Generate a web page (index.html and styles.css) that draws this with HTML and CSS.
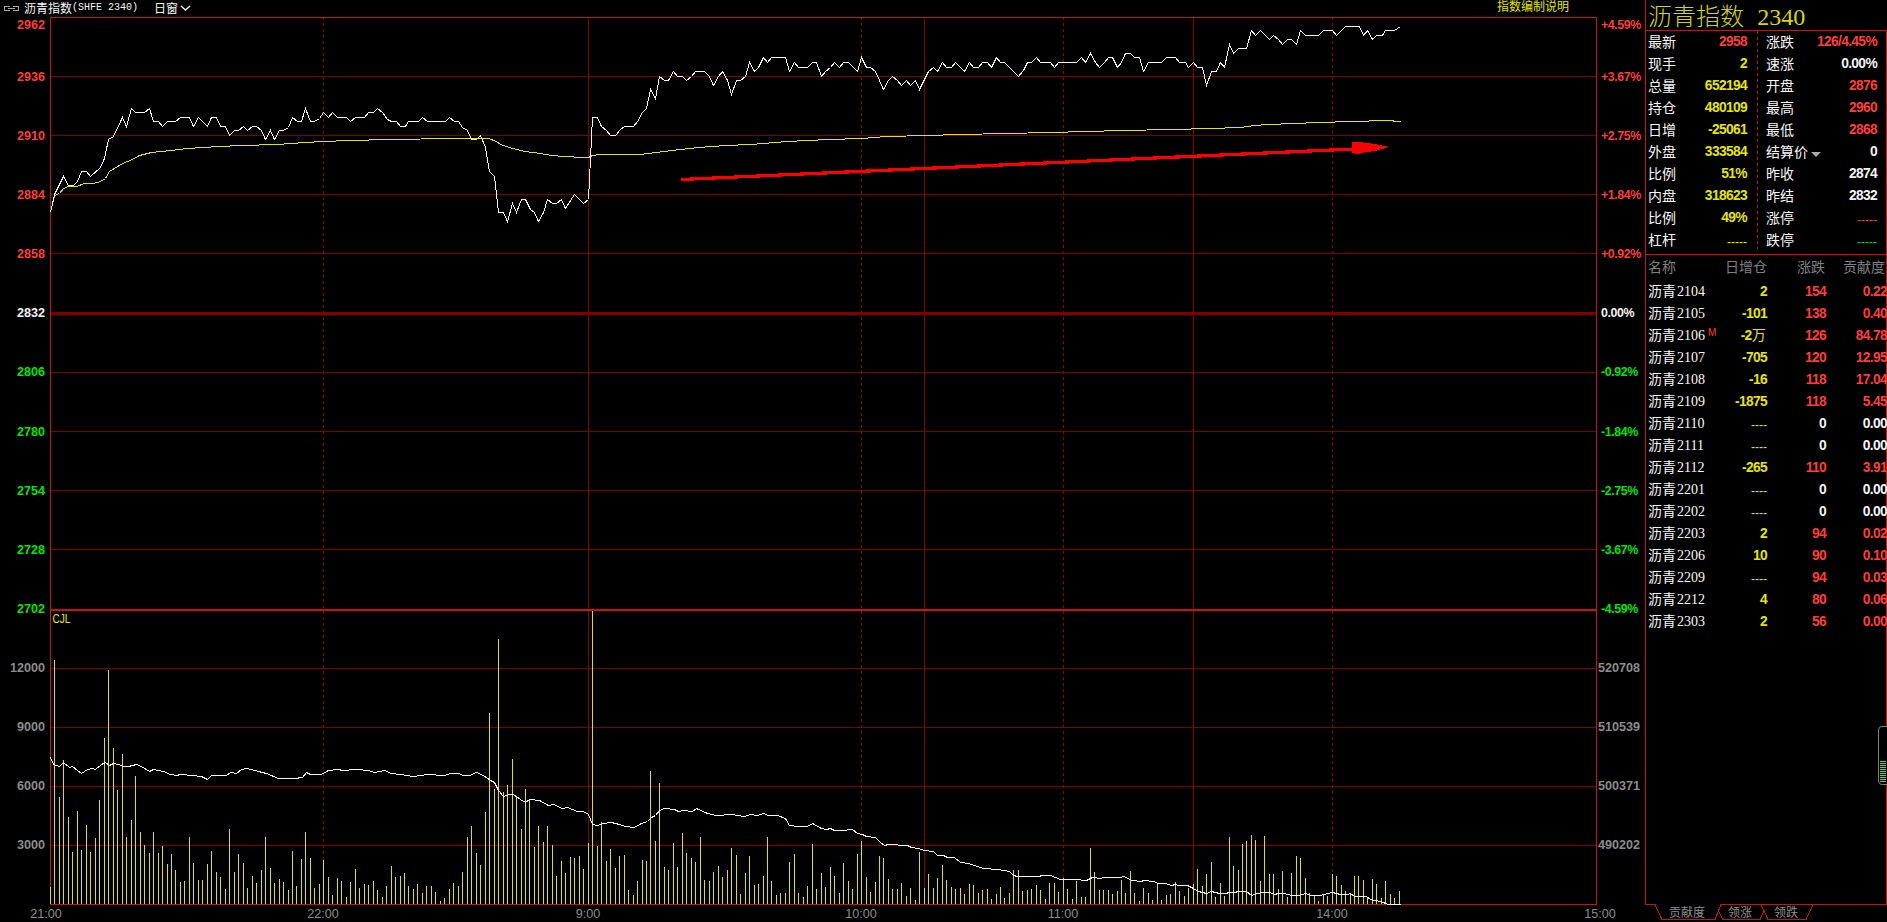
FILE: index.html
```html
<!DOCTYPE html>
<html lang="zh-CN">
<head>
    <meta charset="UTF-8">
    <title>沥青指数 2340</title>
    <link rel="stylesheet" href="styles.css">
</head>
<body>
    <div class="app">
        <div class="main">
            <div class="topbar">
                <svg class="link-icon" width="17" height="7" viewBox="0 0 17 7" shape-rendering="crispEdges">
                    <path d="M6.5 2V1.5H1.5V5.5H6.5V5M10.5 2V1.5H15.5V5.5H10.5V5M5 3.5H12" fill="none" stroke="#a8a8a8"/>
                </svg>
                <span class="name">沥青指数</span><span class="code">(SHFE 2340)</span>
                <span class="period">日窗</span>
                <svg class="chevron" width="11" height="7" viewBox="0 0 11 7"><path d="M1 1L5.5 5L10 1" fill="none" stroke="#f0f0f0" stroke-width="1.5"/></svg>
                <span class="explain">指数编制说明</span>
            </div>
            <div class="charts">
                <div class="axis axis-left">
                    <span class="edge up">2962</span>
                    <span class="up">2936</span>
                    <span class="up">2910</span>
                    <span class="up">2884</span>
                    <span class="up">2858</span>
                    <span class="flat">2832</span>
                    <span class="down">2806</span>
                    <span class="down">2780</span>
                    <span class="down">2754</span>
                    <span class="down">2728</span>
                    <span class="down">2702</span>
                    <span>12000</span>
                    <span>9000</span>
                    <span>6000</span>
                    <span>3000</span>
                </div>
                <svg class="plot" width="1547" height="888" viewBox="50 17 1547 888" shape-rendering="crispEdges">
                    <g id="grid"></g>
                    <g id="bars"></g>
                    <polyline id="oi" class="line-white"/>
                    <polyline id="avg" class="line-yellow"/>
                    <polyline id="price" class="line-white"/>
                    <line class="arrow" x1="681" y1="179.5" x2="1354" y2="149"/>
                    <polygon class="arrow-head" points="1352,142 1358,142 1367,143 1375,144 1389,147 1375,151 1366,152 1358,154 1352,153"/>
                    <text class="indicator" x="52.5" y="623" textLength="18" lengthAdjust="spacingAndGlyphs">CJL</text>
                </svg>
                <div class="axis axis-right">
                    <span class="edge up">+4.59%</span>
                    <span class="up">+3.67%</span>
                    <span class="up">+2.75%</span>
                    <span class="up">+1.84%</span>
                    <span class="up">+0.92%</span>
                    <span class="flat">0.00%</span>
                    <span class="down">-0.92%</span>
                    <span class="down">-1.84%</span>
                    <span class="down">-2.75%</span>
                    <span class="down">-3.67%</span>
                    <span class="down">-4.59%</span>
                    <span class="vol">520708</span>
                    <span class="vol">510539</span>
                    <span class="vol">500371</span>
                    <span class="vol">490202</span>
                </div>
            </div>
            <div class="times">
                <span>21:00</span><span>22:00</span><span>9:00</span><span>10:00</span><span>11:00</span><span>14:00</span><span>15:00</span>
            </div>
        </div>

        <div class="side">
            <div class="panel">
                <div class="title">沥青指数 <span class="title-code">2340</span></div>
                <div class="quote">
                    <div class="col">
                        <div class="row"><span>最新</span><b class="up">2958</b></div>
                        <div class="row"><span>现手</span><b class="yellow">2</b></div>
                        <div class="row"><span>总量</span><b class="yellow">652194</b></div>
                        <div class="row"><span>持仓</span><b class="yellow">480109</b></div>
                        <div class="row"><span>日增</span><b class="yellow">-25061</b></div>
                        <div class="row"><span>外盘</span><b class="yellow">333584</b></div>
                        <div class="row"><span>比例</span><b class="yellow">51%</b></div>
                        <div class="row"><span>内盘</span><b class="yellow">318623</b></div>
                        <div class="row"><span>比例</span><b class="yellow">49%</b></div>
                        <div class="row"><span>杠杆</span><i class="yellow">-----</i></div>
                    </div>
                    <div class="col col-right">
                        <div class="row"><span>涨跌</span><b class="up">126/4.45%</b></div>
                        <div class="row"><span>速涨</span><b class="flat">0.00%</b></div>
                        <div class="row"><span>开盘</span><b class="up">2876</b></div>
                        <div class="row"><span>最高</span><b class="up">2960</b></div>
                        <div class="row"><span>最低</span><b class="up">2868</b></div>
                        <div class="row"><span class="dropdown">结算价</span><b class="flat">0</b></div>
                        <div class="row"><span>昨收</span><b class="flat">2874</b></div>
                        <div class="row"><span>昨结</span><b class="flat">2832</b></div>
                        <div class="row"><span>涨停</span><i class="up">-----</i></div>
                        <div class="row"><span>跌停</span><i class="down">-----</i></div>
                    </div>
                </div>
                <div class="contracts">
                    <div class="item head"><span>名称</span><span>日增仓</span><span>涨跌</span><span>贡献度</span></div>
                    <div class="item"><span>沥青<em>2104</em></span><b class="yellow">2</b><b class="up">154</b><b class="up">0.22</b></div>
                    <div class="item"><span>沥青<em>2105</em></span><b class="yellow">-101</b><b class="up">138</b><b class="up">0.40</b></div>
                    <div class="item"><span>沥青<em>2106</em><sup>M</sup></span><b class="yellow wan">-2<span>万</span></b><b class="up">126</b><b class="up">84.78</b></div>
                    <div class="item"><span>沥青<em>2107</em></span><b class="yellow">-705</b><b class="up">120</b><b class="up">12.95</b></div>
                    <div class="item"><span>沥青<em>2108</em></span><b class="yellow">-16</b><b class="up">118</b><b class="up">17.04</b></div>
                    <div class="item"><span>沥青<em>2109</em></span><b class="yellow">-1875</b><b class="up">118</b><b class="up">5.45</b></div>
                    <div class="item"><span>沥青<em>2110</em></span><i class="yellow">----</i><b class="flat">0</b><b class="flat">0.00</b></div>
                    <div class="item"><span>沥青<em>2111</em></span><i class="yellow">----</i><b class="flat">0</b><b class="flat">0.00</b></div>
                    <div class="item"><span>沥青<em>2112</em></span><b class="yellow">-265</b><b class="up">110</b><b class="up">3.91</b></div>
                    <div class="item"><span>沥青<em>2201</em></span><i class="yellow">----</i><b class="flat">0</b><b class="flat">0.00</b></div>
                    <div class="item"><span>沥青<em>2202</em></span><i class="yellow">----</i><b class="flat">0</b><b class="flat">0.00</b></div>
                    <div class="item"><span>沥青<em>2203</em></span><b class="yellow">2</b><b class="up">94</b><b class="up">0.02</b></div>
                    <div class="item"><span>沥青<em>2206</em></span><b class="yellow">10</b><b class="up">90</b><b class="up">0.10</b></div>
                    <div class="item"><span>沥青<em>2209</em></span><i class="yellow">----</i><b class="up">94</b><b class="up">0.03</b></div>
                    <div class="item"><span>沥青<em>2212</em></span><b class="yellow">4</b><b class="up">80</b><b class="up">0.06</b></div>
                    <div class="item"><span>沥青<em>2303</em></span><b class="yellow">2</b><b class="up">56</b><b class="up">0.00</b></div>
                </div>
            </div>
            <svg class="tabs" width="242" height="18" viewBox="1645 904 242 18" shape-rendering="crispEdges">
                <path d="M1645 904.5H1655L1662 919.5H1715L1721 904.5H1887M1718.5 911L1723 919.5H1760L1764.5 910M1761 904.5L1768 919.5H1806L1813 904.5"/>
                <text x="1669" y="917">贡献度</text>
                <text x="1728" y="917">领涨</text>
                <text x="1774" y="917">领跌</text>
            </svg>
            <div class="gauge"><div class="level"></div></div>
        </div>
    </div>
    <script src="script.js"></script>
</body>
</html>
```
FILE: styles.css
```css
* {
    box-sizing: border-box;
}
body {
    margin: 0;
    background: #000;
    color: #f8f8f8;
    font-family: "Liberation Sans", "Noto Sans CJK SC", sans-serif;
    overflow: hidden;
}
.app {
    display: flex;
    width: 1887px;
    height: 922px;
}
.up {
    color: #ff3c3c;
}
.down {
    color: #00e600;
}
.flat {
    color: #f4f4f4;
}
.yellow {
    color: #e6e600;
}

/* chart area */
.main {
    width: 1645px;
}
.topbar {
    display: flex;
    align-items: center;
    height: 17px;
    padding-left: 3px;
    font: 12px/16px "Noto Sans CJK SC", sans-serif;
    white-space: pre;
}
.topbar span {
    margin-top: -2px;
}
.link-icon {
    margin-right: 4px;
}
.code {
    width: 66px;
    font: 10px/16px "Liberation Mono", monospace;
}
.period {
    margin-left: 16px;
}
.chevron {
    margin-left: 2px;
}
.topbar .explain {
    margin-left: 1306px;
    margin-top: -6px;
    color: #e6e600;
}
.charts {
    display: flex;
    height: 888px;
}
.axis {
    display: flex;
    flex-direction: column;
    color: #8c8c8c;
    font-size: 12.6px;
    font-weight: bold;
}
.axis span {
    flex: none;
    height: 59.1px;
    line-height: 60px;
}
.axis .edge {
    height: 30px;
    line-height: 16px;
}
.axis-left {
    width: 50px;
    padding-right: 5px;
    text-align: right;
}
.axis-right {
    width: 48px;
    padding-left: 4px;
}
.axis-right span {
    font-size: 12.4px;
    letter-spacing: -0.4px;
}
.axis-right .vol {
    margin-left: -3px;
    font-size: 12.6px;
    letter-spacing: 0;
}
.plot {
    display: block;
}
.line-white {
    fill: none;
    stroke: #f4f4f4;
}
.line-yellow {
    fill: none;
    stroke: #e6e600;
}
.bar {
    fill: #e0e010;
}
.grid-line {
    fill: #800000;
}
.frame-line {
    fill: #c81410;
}
.dash-line {
    stroke: #900000;
    stroke-dasharray: 3 3;
}
.arrow {
    stroke: #f00;
    stroke-width: 3.2;
}
.arrow-head {
    fill: #f00;
}
.indicator {
    fill: #e6e600;
    font-size: 12.6px;
}
.times {
    display: grid;
    grid-template-columns: 277px 265px 273px 202px 269px 268px 40px;
    padding-left: 26px;
    color: #8c8c8c;
    font-size: 12.6px;
    line-height: 18px;
}
.times span {
    width: 40px;
    text-align: center;
}

/* quote panel */
.side {
    position: relative;
    width: 242px;
}
.panel {
    height: 904px;
    border-left: 1px solid #c81410;
}
.title {
    height: 31px;
    padding-left: 2px;
    border-bottom: 1px solid #c81410;
    color: #d8d800;
    font: 300 24px/29px "Noto Sans CJK SC", sans-serif;
    white-space: pre;
}
.title-code {
    margin-left: 8px;
    font: 24px/29px "Liberation Serif", serif;
}
.quote {
    display: flex;
    height: 224px;
    border-right: 1px solid #c81410;
    border-bottom: 1px solid #c81410;
}
.col {
    width: 112px;
    padding: 0 11px 0 2px;
}
.col:first-child {
    background: repeating-linear-gradient(to bottom, #c81410 0 3px, transparent 3px 6px) right top / 1px 218px no-repeat;
}
.col-right {
    width: 128px;
    padding: 0 9px 0 8px;
}
.row {
    display: flex;
    justify-content: space-between;
    height: 22px;
    font-size: 13.8px;
    line-height: 22px;
}
.row span {
    font: 14px/20px "Noto Sans CJK SC", sans-serif;
}
.row b,
.item b {
    letter-spacing: -0.65px;
}
.row i,
.item i {
    padding-top: 2px;
    font-size: 12px;
    font-style: normal;
}
.dropdown::after {
    content: "";
    display: inline-block;
    margin-left: 3px;
    border: 5px solid transparent;
    border-top-color: #aaa;
    border-bottom: 0;
}
.contracts {
    border-right: 1px solid #c81410;
    height: 649px;
}
.item {
    display: grid;
    grid-template-columns: 60px 59px 59px 61px;
    height: 22px;
    padding-left: 2px;
    font-size: 13.8px;
    line-height: 23px;
    text-align: right;
}
.item span {
    font: 14px/20px "Noto Sans CJK SC", sans-serif;
    white-space: nowrap;
}
.item > span:first-child {
    text-align: left;
}
.item em {
    margin-left: 1px;
    font: 14px/20px "Liberation Serif", serif;
}
.item sup {
    margin-left: 3px;
    color: #ff3c3c;
    font: 10px/10px "Liberation Sans", sans-serif;
    vertical-align: 4px;
}
.item.head {
    grid-template-columns: 60px 59px 58px 60px;
    height: 25px;
    color: #808080;
}
.item.head span {
    line-height: 22px;
}
.wan {
    padding-right: 2px;
}
.tabs {
    display: block;
}
.tabs path {
    fill: none;
    stroke: #c81410;
}
.tabs text {
    fill: #909090;
    font: 12px "Noto Sans CJK SC", sans-serif;
}
.gauge {
    position: absolute;
    top: 726px;
    right: -4px;
    width: 13px;
    height: 59px;
    padding: 34px 2px 0 1px;
    border: 1px solid #808080;
    border-radius: 4px;
    background: #000;
}
.level {
    width: 6px;
    height: 21px;
    background: repeating-linear-gradient(to bottom, #4cd964 0 1px, transparent 1px 2px);
}
```
FILE: script.js
```js
const NS = 'http://www.w3.org/2000/svg';
const STEP = 1546 / 345;

// bar heights, one per minute
const volumes = [
    17, 244, 107, 144, 87, 52, 93, 54, 79, 52, 66, 104, 166, 234, 156, 114, 150, 67, 84, 128,
    72, 59, 51, 72, 51, 58, 40, 50, 34, 22, 23, 67, 41, 24, 24, 40, 53, 32, 27, 15,
    75, 32, 50, 41, 16, 28, 21, 34, 67, 36, 21, 25, 22, 14, 53, 18, 45, 72, 46, 16,
    20, 44, 27, 9, 26, 23, 7, 22, 35, 16, 20, 19, 23, 14, 7, 18, 38, 27, 28, 31,
    18, 15, 20, 11, 18, 18, 12, 3, 6, 15, 21, 18, 32, 67, 78, 51, 39, 92, 191, 115,
    265, 112, 119, 145, 108, 75, 115, 104, 57, 78, 62, 78, 59, 28, 43, 31, 47, 46, 48, 35,
    61, 293, 58, 82, 43, 55, 36, 48, 49, 14, 9, 23, 44, 43, 133, 63, 121, 37, 34, 61,
    37, 71, 51, 46, 42, 67, 24, 23, 32, 38, 27, 34, 56, 49, 10, 31, 48, 19, 20, 28,
    67, 23, 9, 11, 11, 42, 50, 11, 7, 18, 60, 15, 31, 17, 37, 28, 11, 41, 23, 15,
    50, 63, 27, 12, 22, 48, 46, 25, 15, 15, 21, 8, 16, 4, 52, 16, 30, 16, 26, 39,
    24, 17, 15, 16, 10, 20, 19, 11, 14, 15, 5, 10, 17, 6, 11, 34, 34, 13, 14, 15,
    19, 14, 5, 21, 21, 12, 26, 15, 5, 23, 7, 7, 56, 32, 14, 14, 14, 10, 13, 24,
    11, 33, 11, 3, 16, 11, 4, 20, 4, 9, 10, 22, 13, 8, 16, 20, 35, 18, 30, 42,
    7, 21, 8, 67, 38, 34, 60, 63, 69, 64, 23, 68, 30, 30, 15, 33, 7, 31, 48, 46,
    26, 11, 9, 3, 9, 8, 30, 28, 19, 13, 10, 28, 28, 24, 7, 25, 20, 6, 23, 10,
    6, 13
];

const price = `50,212 54,194 63,176 68,185 73,185 77,181 81,171 86,171 90,176 100,167 104,158 108,139 113,136
122,117 126,126 131,108 135,112 144,112 149,108 153,121 158,121 162,126 167,121 175,121 180,117 189,117 193,126
198,117 207,126 211,117 216,117 220,126 225,126 229,135 234,130 238,130 243,126 247,130 252,126 256,126 261,130
265,139 270,130 274,139 279,130 283,130 288,127 292,117 297,121 301,121 305,108 310,121 314,121 319,118 323,112
328,117 332,112 337,117 346,117 350,121 355,117 364,117 368,112 373,112 377,108 382,112 387,119 391,121 396,121
400,126 405,126 408,121 418,121 422,117 427,121 445,121 449,117 454,121 458,121 462,127 467,130 471,139 476,139
480,135 485,147 489,171 494,176 498,212 503,212 507,221 512,203 516,212 521,199 525,199 530,209 534,212 538,221
543,212 547,199 552,203 556,203 561,199 565,208 574,194 583,203 588,199 592,117 597,117 601,126 606,130 610,135
615,135 620,129 624,126 633,126 638,120 641,113 646,108 650,89 655,98 659,76 664,80 668,80 673,71 677,76 682,76
686,80 691,76 695,71 704,71 709,76 713,85 718,76 722,71 727,80 731,94 736,80 740,80 745,76 749,62 754,71 758,67
763,57 767,62 771,57 785,57 789,71 794,62 798,67 807,67 812,62 816,62 821,76 825,71 830,67 834,62 839,67 843,62
848,62 853,67 857,71 861,57 866,67 870,67 875,71 883,89 888,80 892,76 897,80 901,85 906,80 910,85 915,80 919,89
928,71 933,67 937,71 942,62 946,67 951,67 955,62 964,71 969,62 973,67 978,67 982,62 987,62 991,67 996,57 1000,62
1004,62 1018,76 1023,70 1027,62 1031,62 1036,57 1040,62 1050,62 1054,67 1058,62 1076,62 1081,57 1085,62 1090,53
1095,62 1099,67 1104,62 1108,57 1112,57 1117,67 1121,62 1125,53 1130,53 1134,57 1139,57 1143,71 1148,62 1161,62
1166,57 1175,57 1179,62 1185,62 1188,67 1193,62 1197,67 1202,67 1206,85 1211,71 1216,71 1220,62 1224,67 1229,44
1233,53 1238,48 1246,48 1251,30 1255,35 1260,30 1269,39 1273,35 1278,39 1282,44 1287,39 1291,39 1296,44 1300,30
1305,35 1318,35 1323,30 1332,30 1336,35 1345,26 1359,26 1363,35 1367,30 1372,39 1376,35 1382,35 1385,30 1394,30
1400,26`;

const avg = `50,212 54,195 59,193 63,188 68,186 76,186 84,183 93,183 100,181 105,178 109,171 122,163 132,159
139,155 151,152 170,150 187,148 218,146 241,145 277,144 304,142 323,141 349,140 389,139 452,138 488,138 496,141
500,144 512,148 525,151 540,153 551,155 564,156 583,157 588,157 592,155 600,154 640,154 656,152 680,149 698,147
725,145 751,144 786,141 828,139 861,138 886,136 927,135 958,134 1007,133 1048,132 1088,131 1120,130 1173,129
1209,128 1240,127 1254,125 1267,124 1294,123 1317,122 1353,121 1384,120 1392,120 1394,121 1400,121`;

const openInterest = `50,757 53,764 59,766 63,762 69,767 72,766 77,770 81,773 87,769 92,768 95,769 101,764
105,762 109,765 113,763 118,764 123,766 128,766 136,764 141,766 149,771 153,769 163,771 170,774 176,775 180,774
192,775 201,776 207,779 211,775 226,775 230,772 236,773 241,769 247,768 258,771 266,773 278,778 294,778 302,777
306,772 310,774 321,774 328,770 338,769 342,770 356,769 368,770 374,772 384,770 391,773 400,774 413,776 427,774
444,775 450,773 458,773 463,775 469,775 476,772 483,775 490,780 494,782 498,790 503,796 509,794 513,794 520,799
525,802 529,799 539,800 548,805 553,804 562,808 567,807 577,811 583,811 588,814 592,824 597,825 603,823 611,822
619,824 625,826 634,827 641,823 647,821 651,817 655,815 659,810 664,808 674,809 678,811 683,810 692,811 696,808
707,813 716,815 731,814 744,816 750,814 757,815 763,813 768,815 777,815 785,818 789,825 797,826 807,826 812,823
821,828 826,829 830,828 834,830 845,830 848,829 852,829 857,833 862,834 866,836 875,837 880,842 884,845 888,844
907,845 911,847 918,848 924,850 933,851 937,855 943,855 947,857 954,857 960,862 968,863 983,868 997,869 1009,871
1013,875 1017,876 1039,876 1041,875 1050,875 1060,879 1079,879 1082,880 1086,880 1092,877 1100,878 1103,877
1120,877 1123,876 1132,880 1140,881 1144,880 1153,881 1158,883 1165,883 1171,885 1175,884 1178,885 1187,885
1193,888 1198,891 1206,893 1211,891 1219,893 1226,893 1228,892 1234,892 1238,891 1246,891 1251,895 1256,893
1264,892 1269,892 1275,894 1277,893 1284,893 1291,895 1298,895 1305,893 1311,895 1320,895 1327,893 1332,892
1340,894 1347,894 1350,893 1354,896 1366,896 1370,899 1380,901 1388,904 1400,904`;

function add(parent, tag, attrs) {
    const el = document.createElementNS(NS, tag);
    for (const key in attrs) el.setAttribute(key, attrs[key]);
    document.getElementById(parent).appendChild(el);
}

function rect(parent, cls, x, y, width, height) {
    add(parent, 'rect', { class: cls, x, y, width, height });
}

// centre the strokes on whole pixels
function drawLine(id, points) {
    const shifted = points.split(/\s+/).map(p => {
        const [x, y] = p.split(',').map(Number);
        return `${x + 0.5},${y + 0.5}`;
    });
    document.getElementById(id).setAttribute('points', shifted.join(' '));
}

[76, 135, 194, 253, 372, 431, 490, 549, 668, 727, 786, 845].forEach(y => rect('grid', 'grid-line', 50, y, 1546, 1));
rect('grid', 'grid-line', 50, 312, 1546, 3);
[588, 924, 1193].forEach(x => rect('grid', 'grid-line', x, 17, 1, 887));
[323, 861, 1063, 1332].forEach(x => add('grid', 'line', { class: 'dash-line', x1: x + 0.5, x2: x + 0.5, y1: 17, y2: 904 }));
rect('grid', 'frame-line', 50, 17, 1547, 1);
rect('grid', 'frame-line', 50, 609, 1547, 2);
rect('grid', 'frame-line', 50, 904, 1547, 1);
rect('grid', 'frame-line', 50, 17, 1, 888);
rect('grid', 'frame-line', 1596, 17, 1, 888);

volumes.forEach((h, i) => rect('bars', 'bar', 50 + Math.round(i * STEP), 904 - h, 1, h));

drawLine('oi', openInterest);
drawLine('avg', avg);
drawLine('price', price);
```
